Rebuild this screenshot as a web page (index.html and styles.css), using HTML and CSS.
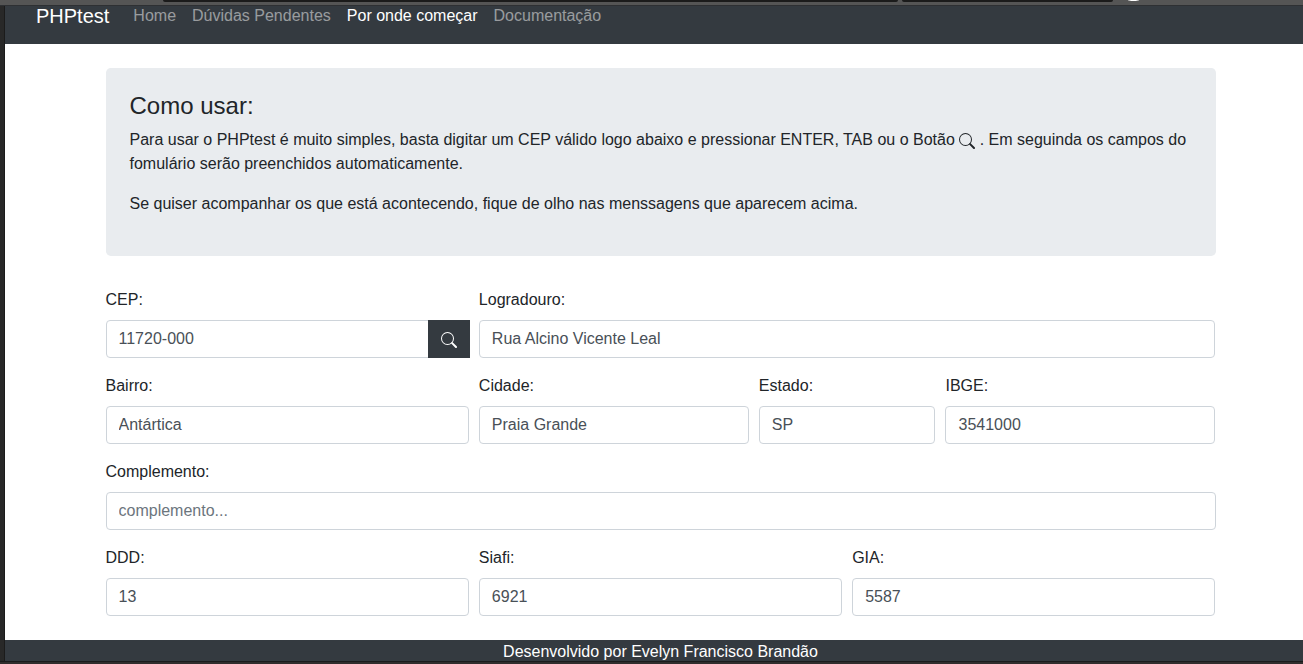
FILE: index.html
```html
<!DOCTYPE html>
<html lang="pt-BR">
<head>
<meta charset="utf-8">
<title>PHPtest</title>
<link rel="stylesheet" href="styles.css">
</head>
<body>
<div class="window">
  <div class="chrome"><span class="tab tab-main"></span><span class="tab tab-side"></span><span class="dot"></span></div>
  <div class="view">
    <nav class="navbar">
      <a class="brand">PHPtest</a>
      <a class="link">Home</a>
      <a class="link">Dúvidas Pendentes</a>
      <a class="link active">Por onde começar</a>
      <a class="link">Documentação</a>
    </nav>
    <main class="container">
      <section class="jumbotron">
        <h4>Como usar:</h4>
        <p>Para usar o PHPtest é muito simples, basta digitar um CEP válido logo abaixo e pressionar ENTER, TAB ou o Botão <svg class="icon" viewBox="0 0 16 16"><path fill-rule="evenodd" d="M10.442 10.442a1 1 0 0 1 1.415 0l3.85 3.85a1 1 0 0 1-1.414 1.415l-3.85-3.85a1 1 0 0 1 0-1.415z"/><path fill-rule="evenodd" d="M6.5 12a5.5 5.5 0 1 0 0-11 5.5 5.5 0 0 0 0 11zM13 6.500a6.5 6.5 0 1 1-13 0 6.500 6.500 0 0 1 13 0z"/></svg> . Em seguinda os campos do fomulário serão preenchidos automaticamente.</p>
        <p>Se quiser acompanhar os que está acontecendo, fique de olho nas menssagens que aparecem acima.</p>
      </section>
      <form>
        <div class="row">
          <div class="col c4"><label>CEP:</label>
            <div class="group"><input class="control" value="11720-000"><button type="button" class="search"><svg class="icon" viewBox="0 0 16 16"><path fill-rule="evenodd" d="M10.442 10.442a1 1 0 0 1 1.415 0l3.85 3.85a1 1 0 0 1-1.414 1.415l-3.85-3.85a1 1 0 0 1 0-1.415z"/><path fill-rule="evenodd" d="M6.5 12a5.5 5.5 0 1 0 0-11 5.5 5.5 0 0 0 0 11zM13 6.500a6.5 6.5 0 1 1-13 0 6.500 6.500 0 0 1 13 0z"/></svg></button></div>
          </div>
          <div class="col c8"><label>Logradouro:</label><input class="control" value="Rua Alcino Vicente Leal"></div>
        </div>
        <div class="row">
          <div class="col c4"><label>Bairro:</label><input class="control" value="Antártica"></div>
          <div class="col c3"><label>Cidade:</label><input class="control" value="Praia Grande"></div>
          <div class="col c2"><label>Estado:</label><input class="control" value="SP"></div>
          <div class="col c3"><label>IBGE:</label><input class="control" value="3541000"></div>
        </div>
        <div class="row">
          <div class="col c12"><label>Complemento:</label><input class="control" placeholder="complemento..."></div>
        </div>
        <div class="row">
          <div class="col c4"><label>DDD:</label><input class="control" value="13"></div>
          <div class="col c4"><label>Siafi:</label><input class="control" value="6921"></div>
          <div class="col c4"><label>GIA:</label><input class="control" value="5587"></div>
        </div>
      </form>
    </main>
    <footer class="footer">Desenvolvido por Evelyn Francisco Brandão</footer>
  </div>
</div>
</body>
</html>
```
FILE: styles.css
```css
* { box-sizing: border-box; }
body {
  margin: 0;
  font: 16px/24px "Liberation Sans", Arial, sans-serif;
  color: #212529;
  background: #282828;
}
.window { height: 664px; overflow: hidden; display: flex; flex-direction: column; }
.chrome {
  flex: none;
  height: 6px;
  display: flex;
  align-items: flex-start;
  padding-left: 163px;
  background: #555;
  border-bottom: 1px solid #2e3033;
}
.tab { height: 2px; background: #1b1b1b; border-radius: 0 0 2px 2px; }
.tab-main { width: 735px; }
.tab-side { width: 211px; margin-left: 4px; }
.dot { width: 11px; height: 1px; margin-left: 15px; background: linear-gradient(90deg, #888, #fff 30%, #fff 70%, #888); }
.view {
  height: 655px;
  flex: none;
  margin-left: 4px;
  border-left: 1px solid #1b1b1b;
  background: #fff;
  display: flex;
  flex-direction: column;
}
.window::after { content: ""; height: 3px; background: #302d2d; border-top: 1px solid #1a1b1c; }
.navbar {
  flex: none;
  height: 38px;
  display: flex;
  align-items: flex-start;
  padding-left: 31px;
  background: #343a40;
}
.brand { font-size: 20px; line-height: 30px; margin: -5px 16px 0 0; color: #fff; }
.link { padding: 0 8px; margin-top: -2px; color: rgba(255, 255, 255, .5); }
.link.active { color: #fff; }
.container { width: 1110px; margin: 24px 0 0 100.5px; flex: 1; }
.jumbotron { height: 188px; padding: 24px 24px 0; margin-bottom: 32px; background: #e9ecef; border-radius: 4.8px; }
h4 { margin: 0 0 7px; font-size: 24px; font-weight: 400; line-height: 28.8px; }
p { margin: 0 0 16px; }
.icon { width: 16px; height: 16px; fill: currentColor; vertical-align: middle; }
.row { display: flex; margin: 0 -5px; }
.col { padding: 0 5px; margin-bottom: 16px; }
.c2 { width: 16.6667%; }
.c3 { width: 25%; }
.c4 { width: 33.3333%; }
.c8 { width: 66.6667%; }
.c12 { width: 100%; }
label { display: block; margin-bottom: 8px; }
.control {
  display: block;
  width: 100%;
  height: 38px;
  padding: 6px 12px;
  font: inherit;
  color: #495057;
  background: #fff;
  border: 1px solid #ced4da;
  border-radius: 4px;
}
.control::placeholder { color: #6c757d; opacity: 1; }
.group { display: flex; margin-right: -1px; }
.group .control { flex: 1; width: 0; border-radius: 4px 0 0 4px; }
.search {
  width: 42px;
  height: 38px;
  margin-left: -1px;
  padding: 2px 0 0;
  border: 0;
  color: #fff;
  background: #343a40;
}
.footer { flex: none; height: 21px; line-height: 23px; padding-left: 13px; text-align: center; color: #fff; background: #343a40; }
```
